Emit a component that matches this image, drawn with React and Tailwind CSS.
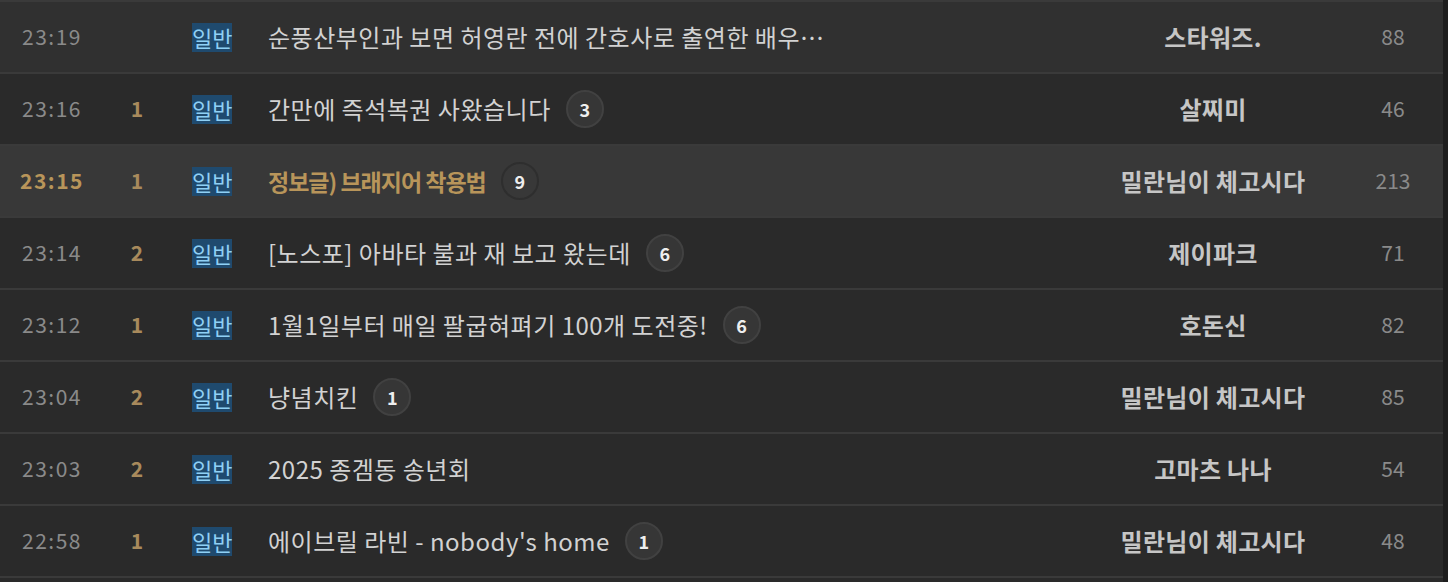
const posts = [
  { time: "23:19", rec: "", title: "순풍산부인과 보면 허영란 전에 간호사로 출연한 배우…", comments: null, author: "스타워즈.", views: 88, tone: "light" },
  { time: "23:16", rec: "1", title: "간만에 즉석복권 사왔습니다", comments: 3, author: "살찌미", views: 46 },
  { time: "23:15", rec: "1", title: "정보글) 브래지어 착용법", comments: 9, author: "밀란님이 체고시다", views: 213, tone: "active" },
  { time: "23:14", rec: "2", title: "[노스포] 아바타 불과 재 보고 왔는데", comments: 6, author: "제이파크", views: 71 },
  { time: "23:12", rec: "1", title: "1월1일부터 매일 팔굽혀펴기 100개 도전중!", comments: 6, author: "호돈신", views: 82 },
  { time: "23:04", rec: "2", title: "냥념치킨", comments: 1, author: "밀란님이 체고시다", views: 85 },
  { time: "23:03", rec: "2", title: "2025 종겜동 송년회", comments: null, author: "고마츠 나나", views: 54 },
  { time: "22:58", rec: "1", title: "에이브릴 라빈 - nobody's home", comments: 1, author: "밀란님이 체고시다", views: 48 }
];

function PostRow({ post }) {
  const active = post.tone === "active";
  const rowBg = active ? "bg-[#383838]" : post.tone === "light" ? "bg-[#303030]" : "bg-[#2a2a2a]";

  return (
    <div className={`flex h-[72px] items-center border-b-2 border-[#3a3a3a] ${rowBg}`}>
      <div
        className={`w-[104px] text-center text-[21px] tracking-[1.5px] ${
          active ? "font-bold text-[#b8955a]" : "text-[#8a8a8a]"
        }`}
      >
        {post.time}
      </div>
      <div className="w-[66px] text-center text-[21px] font-bold text-[#a88a5c]">
        {post.rec}
      </div>
      <div className="w-[98px] pl-[22px]">
        <span className="inline-block h-[29px] bg-[#1f4a6e] text-[22px] leading-[29px] text-[#8fd0f5]">
          일반
        </span>
      </div>
      <div className="flex min-w-0 flex-1 items-center gap-[15px]">
        <span
          className={`truncate ${
            active
              ? "text-[23px] font-bold tracking-[-1px] text-[#b8955a]"
              : "text-[24px] tracking-[0.5px] text-[#d2d2d2]"
          }`}
        >
          {post.title}
        </span>
        {post.comments !== null && (
          <span
            className={`flex h-[38px] w-[38px] shrink-0 items-center justify-center rounded-full border-2 text-[18px] font-bold text-[#eeeeee] ${
              active ? "border-[#2e2e2e] bg-[#383838]" : "border-[#414141] bg-[#363636]"
            }`}
          >
            {post.comments}
          </span>
        )}
      </div>
      <div className="w-[260px] text-center text-[24px] font-bold tracking-[0.3px] text-[#c6c6c6]">
        {post.author}
      </div>
      <div className="w-[100px] text-center text-[21px] text-[#8a8a8a]">
        {post.views}
      </div>
    </div>
  );
}

export default function App() {
  return (
    <div
      className="flex h-[582px] overflow-hidden bg-[#1e1e1e]"
      style={{ fontFamily: '"Noto Sans CJK KR", "Noto Sans", sans-serif' }}
    >
      <div className="w-[1443px] shrink-0 bg-[#2a2a2a]">
        <div className="border-t-2 border-[#3a3a3a]">
          {posts.map((post, i) => (
            <PostRow key={i} post={post} />
          ))}
        </div>
      </div>
    </div>
  );
}
